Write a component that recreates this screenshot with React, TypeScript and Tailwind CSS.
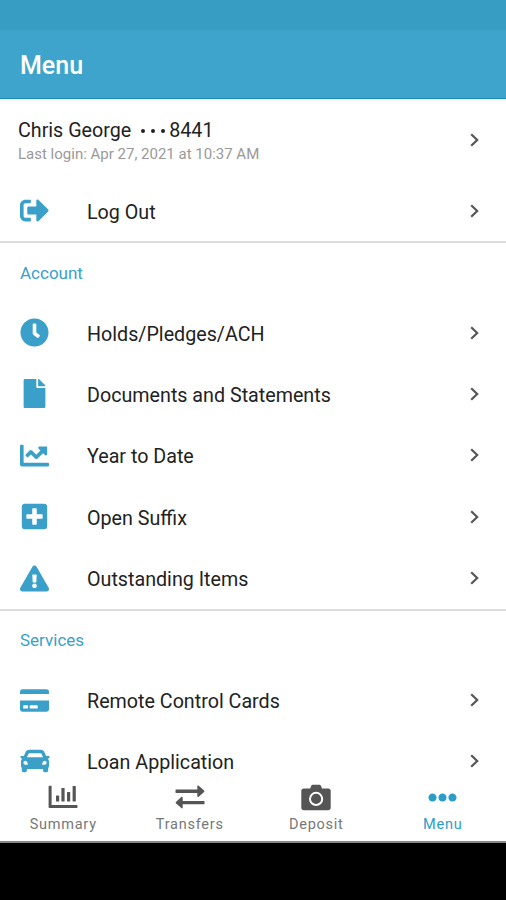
import type { ReactNode } from "react";
import {
  FaChartLine,
  FaClock,
  FaCreditCard,
  FaEllipsisH,
  FaExclamationTriangle,
  FaFile,
  FaPlusSquare,
  FaSignOutAlt,
} from "react-icons/fa";

function Chevron() {
  return (
    <svg className="h-[14px] w-[9px] shrink-0" viewBox="0 0 9 14" fill="none">
      <path d="M1.2 1.2 7.2 7l-6 5.8" stroke="#555555" strokeWidth="2.2" />
    </svg>
  );
}

function Car() {
  return (
    <svg
      className="h-[24px] w-[30px]"
      viewBox="0 0 30 24"
      fill="currentColor"
      fillRule="evenodd"
    >
      <path d="M9.300.800h11.400c1.900 0 3.200 1 3.900 2.600l1.500 3.500h2.800c.5 0 .8.400.7.900l-.3 1c-.1.400-.4.600-.8.600h-.9c1 .9 1.400 2 1.400 3.300v4c0 .9-.3 1.700-.8 2.300v2.600c0 1-.7 1.700-1.700 1.700h-1.700c-1 0-1.700-.7-1.700-1.700v-1.600H6.900v1.600c0 1-.7 1.700-1.700 1.700H3.500c-1 0-1.700-.7-1.700-1.700V19c-.5-.6-.8-1.400-.8-2.300v-4c0-1.300.5-2.400 1.400-3.300h-.9c-.4 0-.7-.2-.8-.6l-.3-1c-.1-.5.200-.9.7-.9h2.800l1.500-3.500C6.100 1.800 7.400.800 9.300.800zM9.600 4.300c-.6 0-1 .3-1.200.8L7 8.300h16l-1.400-3.200c-.2-.5-.6-.8-1.200-.8zM5.400 11.800a2 2 0 1 0 0 4c1.200 0 2.500.2 2.500-.6 0-1.200-1.300-3.400-2.500-3.400zM24.600 11.800c-1.200 0-2.500 2.200-2.500 3.400 0 .8 1.300.6 2.500.6a2 2 0 1 0 0-4z" />
    </svg>
  );
}

function BarChart() {
  return (
    <svg className="h-[24px] w-[30px]" viewBox="0 0 30 24" fill="currentColor">
      <path d="M1.300.800h1.600c.4 0 .7.300.7.700V20h25.200c.4 0 .7.300.7.700v1.600c0 .4-.3.700-.7.700H1.600c-.6 0-1-.4-1-1V1.500c0-.4.300-.7.700-.7z" />
      <rect x="8" y="10.5" width="3.2" height="6" rx=".6" />
      <rect x="13.4" y="3" width="3.2" height="13.5" rx=".6" />
      <rect x="19" y="7" width="3.2" height="9.5" rx=".6" />
      <rect x="24.6" y="1" width="3.2" height="15.5" rx=".6" />
    </svg>
  );
}

function TransferArrows() {
  return (
    <svg className="h-[24px] w-[30px]" viewBox="0 0 30 24" fill="currentColor">
      <path d="M1 4.600h21.300V1.500c0-.9.8-1.300 1.400-.7l5.400 4.800c.4.400.4 1 0 1.400l-5.400 4.800c-.6.600-1.400.200-1.400-.7V7.900H1c-.3 0-.5-.2-.5-.5V5.100c0-.3.200-.5.500-.5z" />
      <path d="M29 15.900H7.700v-3.100c0-.9-.8-1.300-1.400-.7L.9 16.900c-.4.400-.4 1 0 1.400l5.400 4.800c.6.600 1.400.200 1.400-.7v-3.200H29c.3 0 .5-.2.5-.5v-2.300c0-.3-.2-.5-.5-.5z" />
    </svg>
  );
}

function Camera() {
  return (
    <svg className="h-[27px] w-[30px]" viewBox="0 0 30 27" fill="none">
      <path
        d="M2.800 4.500h6.400l.8-2.200C10.400 1.300 11 .8 12 .8h6.200c1 0 1.600.5 2 1.500l.8 2.200h6.200c1.500 0 2.500 1 2.500 2.500v16.700c0 1.500-1 2.500-2.500 2.500H2.800c-1.500 0-2.500-1-2.500-2.500V7c0-1.500 1-2.500 2.500-2.500z"
        fill="currentColor"
      />
      <circle cx="15.1" cy="14.9" r="6.100" stroke="#ffffff" strokeWidth="2" />
    </svg>
  );
}

const accountItems = [
  { label: "Holds/Pledges/ACH", icon: <FaClock /> },
  { label: "Documents and Statements", icon: <FaFile /> },
  { label: "Year to Date", icon: <FaChartLine /> },
  { label: "Open Suffix", icon: <FaPlusSquare /> },
  { label: "Outstanding Items", icon: <FaExclamationTriangle /> },
];

const serviceItems = [
  { label: "Remote Control Cards", icon: <FaCreditCard /> },
  { label: "Loan Application", icon: <Car /> },
];

function MenuRow({ label, icon }: { label: string; icon: ReactNode }) {
  return (
    <div className="flex h-[61.4px] shrink-0 items-center pl-5 pr-[27px]">
      <span className="flex w-[67px] shrink-0 text-[29px] text-[#3aa0c9]">
        {icon}
      </span>
      <span className="flex-1 pt-[4px] text-[19.7px] leading-6">{label}</span>
      <Chevron />
    </div>
  );
}

function SectionTitle({ children }: { children: ReactNode }) {
  return (
    <h2 className="flex h-[60.5px] shrink-0 items-center border-t-2 border-[#dcdcdc] pl-5 pt-[2px] text-[17px] text-[#3aa0c9]">
      {children}
    </h2>
  );
}

function Tab({
  label,
  icon,
  active,
}: {
  label: string;
  icon: ReactNode;
  active?: boolean;
}) {
  return (
    <div
      className={`flex flex-1 flex-col items-center ${active ? "text-[#2a9dc8]" : "text-[#555555]"}`}
    >
      <span className="flex h-[32px] items-center text-[29px]">{icon}</span>
      <span
        className={`mt-[2px] text-[14.5px] leading-5 tracking-[0.75px] ${active ? "" : "text-[#777777]"}`}
      >
        {label}
      </span>
    </div>
  );
}

export default function App() {
  return (
    <div className="flex h-[900px] w-[506px] flex-col overflow-hidden bg-white font-['Roboto',sans-serif] text-[#222222]">
      <div className="h-[30px] shrink-0 bg-[#389dc3]" />
      <header className="flex h-[69px] shrink-0 items-center border-b border-[#168fb9] bg-[#3ea4cb] pl-5 pt-[3px]">
        <h1 className="text-[25px] font-medium text-white">Menu</h1>
      </header>

      <main className="flex min-h-0 flex-1 flex-col overflow-hidden">
        {/* Signed in member */}
        <div className="flex h-[81px] shrink-0 items-center justify-between pl-[18px] pr-[27px]">
          <div className="pt-[5px]">
            <p className="flex items-center text-[19.7px] leading-6">
              Chris George
              <span className="ml-[10px] mr-[4px] flex gap-[6px]">
                {[...Array(3)].map((_, i) => (
                  <span key={i} className="h-1 w-1 rounded-full bg-[#222222]" />
                ))}
              </span>
              8441
            </p>
            <p className="text-[15px] leading-[22px] text-[#999999]">
              Last login: Apr 27, 2021 at 10:37 AM
            </p>
          </div>
          <Chevron />
        </div>
        <MenuRow label="Log Out" icon={<FaSignOutAlt />} />

        <SectionTitle>Account</SectionTitle>
        {accountItems.map((item) => (
          <MenuRow key={item.label} {...item} />
        ))}

        <SectionTitle>Services</SectionTitle>
        {serviceItems.map((item) => (
          <MenuRow key={item.label} {...item} />
        ))}
      </main>

      <nav className="flex h-[62px] shrink-0 border-b-2 border-[#888888] bg-white">
        <Tab label="Summary" icon={<BarChart />} />
        <Tab label="Transfers" icon={<TransferArrows />} />
        <Tab label="Deposit" icon={<Camera />} />
        <Tab label="Menu" icon={<FaEllipsisH />} active />
      </nav>
      <div className="h-[57px] shrink-0 bg-black" />
    </div>
  );
}
